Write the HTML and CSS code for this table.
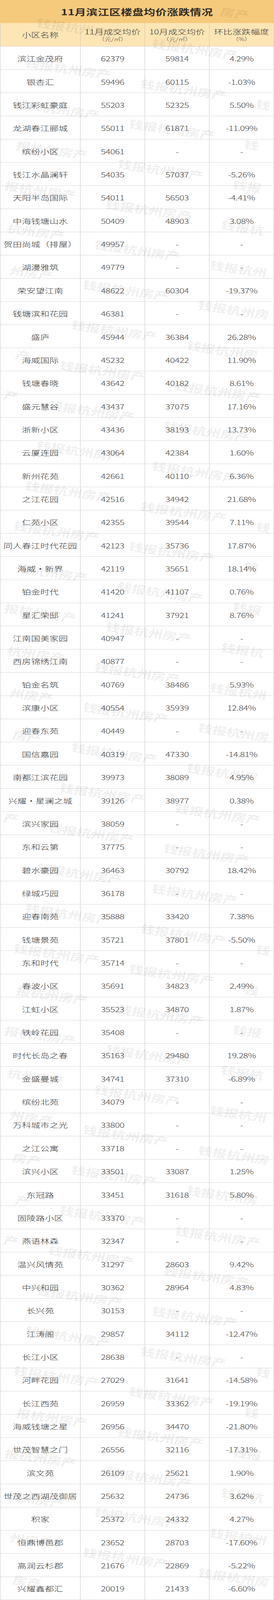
FILE: index.html
```html
<!DOCTYPE html>
<html lang="zh-CN">
<head>
<meta charset="utf-8">
<title>11月滨江区楼盘均价涨跌情况</title>
<link rel="stylesheet" href="styles.css">
</head>
<body>
<div class="page">
<div class="sheet">
  <div class="title">11月滨江区楼盘均价涨跌情况</div>
  <div class="row head">
    <div class="cell"><span class="h1">小区名称</span></div>
    <div class="cell"><span class="h1">11月成交均价</span><span class="h2">（元/㎡）</span></div>
    <div class="cell"><span class="h1">10月成交均价</span><span class="h2">（元/㎡）</span></div>
    <div class="cell"><span class="h1">环比涨跌幅度</span><span class="h2">（%）</span></div>
  </div>
  <div class="row"><div class="cell name">滨江金茂府</div><div class="cell num">62379</div><div class="cell num">59814</div><div class="cell num">4.29%</div></div>
  <div class="row"><div class="cell name">银杏汇</div><div class="cell num">59496</div><div class="cell num">60115</div><div class="cell num">-1.03%</div></div>
  <div class="row"><div class="cell name">钱江彩虹豪庭</div><div class="cell num">55203</div><div class="cell num">52325</div><div class="cell num">5.50%</div></div>
  <div class="row"><div class="cell name">龙湖春江郦城</div><div class="cell num">55011</div><div class="cell num">61871</div><div class="cell num">-11.09%</div></div>
  <div class="row"><div class="cell name">缤纷小区</div><div class="cell num">54061</div><div class="cell num">-</div><div class="cell num">-</div></div>
  <div class="row"><div class="cell name">钱江水晶澜轩</div><div class="cell num">54035</div><div class="cell num">57037</div><div class="cell num">-5.26%</div></div>
  <div class="row"><div class="cell name">天阳半岛国际</div><div class="cell num">54011</div><div class="cell num">56503</div><div class="cell num">-4.41%</div></div>
  <div class="row"><div class="cell name">中海钱塘山水</div><div class="cell num">50409</div><div class="cell num">48903</div><div class="cell num">3.08%</div></div>
  <div class="row"><div class="cell name">贺田尚城（排屋）</div><div class="cell num">49957</div><div class="cell num">-</div><div class="cell num">-</div></div>
  <div class="row"><div class="cell name">湖漫雅筑</div><div class="cell num">49779</div><div class="cell num">-</div><div class="cell num">-</div></div>
  <div class="row"><div class="cell name">荣安望江南</div><div class="cell num">48622</div><div class="cell num">60304</div><div class="cell num">-19.37%</div></div>
  <div class="row"><div class="cell name">钱塘滨和花园</div><div class="cell num">46381</div><div class="cell num">-</div><div class="cell num">-</div></div>
  <div class="row"><div class="cell name">盛庐</div><div class="cell num">45944</div><div class="cell num">36384</div><div class="cell num">26.28%</div></div>
  <div class="row"><div class="cell name">海威国际</div><div class="cell num">45232</div><div class="cell num">40422</div><div class="cell num">11.90%</div></div>
  <div class="row"><div class="cell name">钱塘春晓</div><div class="cell num">43642</div><div class="cell num">40182</div><div class="cell num">8.61%</div></div>
  <div class="row"><div class="cell name">盛元慧谷</div><div class="cell num">43437</div><div class="cell num">37075</div><div class="cell num">17.16%</div></div>
  <div class="row"><div class="cell name">浙新小区</div><div class="cell num">43436</div><div class="cell num">38193</div><div class="cell num">13.73%</div></div>
  <div class="row"><div class="cell name">云厦连园</div><div class="cell num">43064</div><div class="cell num">42384</div><div class="cell num">1.60%</div></div>
  <div class="row"><div class="cell name">新州花苑</div><div class="cell num">42661</div><div class="cell num">40110</div><div class="cell num">6.36%</div></div>
  <div class="row"><div class="cell name">之江花园</div><div class="cell num">42516</div><div class="cell num">34942</div><div class="cell num">21.68%</div></div>
  <div class="row"><div class="cell name">仁苑小区</div><div class="cell num">42355</div><div class="cell num">39544</div><div class="cell num">7.11%</div></div>
  <div class="row"><div class="cell name">同人春江时代花园</div><div class="cell num">42123</div><div class="cell num">35736</div><div class="cell num">17.87%</div></div>
  <div class="row"><div class="cell name"><span class="label">海威<span class="dot">·</span>新界</span></div><div class="cell num">42119</div><div class="cell num">35651</div><div class="cell num">18.14%</div></div>
  <div class="row"><div class="cell name">铂金时代</div><div class="cell num">41420</div><div class="cell num">41107</div><div class="cell num">0.76%</div></div>
  <div class="row"><div class="cell name">星汇荣邸</div><div class="cell num">41241</div><div class="cell num">37921</div><div class="cell num">8.76%</div></div>
  <div class="row"><div class="cell name">江南国美家园</div><div class="cell num">40947</div><div class="cell num">-</div><div class="cell num">-</div></div>
  <div class="row"><div class="cell name">西房锦绣江南</div><div class="cell num">40877</div><div class="cell num">-</div><div class="cell num">-</div></div>
  <div class="row"><div class="cell name">铂金名筑</div><div class="cell num">40769</div><div class="cell num">38486</div><div class="cell num">5.93%</div></div>
  <div class="row"><div class="cell name">滨康小区</div><div class="cell num">40554</div><div class="cell num">35939</div><div class="cell num">12.84%</div></div>
  <div class="row"><div class="cell name">迎春东苑</div><div class="cell num">40449</div><div class="cell num">-</div><div class="cell num">-</div></div>
  <div class="row"><div class="cell name">国信嘉园</div><div class="cell num">40319</div><div class="cell num">47330</div><div class="cell num">-14.81%</div></div>
  <div class="row"><div class="cell name">南都江滨花园</div><div class="cell num">39973</div><div class="cell num">38089</div><div class="cell num">4.95%</div></div>
  <div class="row"><div class="cell name"><span class="label">兴耀<span class="dot">·</span>星澜之城</span></div><div class="cell num">39126</div><div class="cell num">38977</div><div class="cell num">0.38%</div></div>
  <div class="row"><div class="cell name">滨兴家园</div><div class="cell num">38059</div><div class="cell num">-</div><div class="cell num">-</div></div>
  <div class="row"><div class="cell name">东和云第</div><div class="cell num">37775</div><div class="cell num">-</div><div class="cell num">-</div></div>
  <div class="row"><div class="cell name">碧水豪园</div><div class="cell num">36463</div><div class="cell num">30792</div><div class="cell num">18.42%</div></div>
  <div class="row"><div class="cell name">绿城巧园</div><div class="cell num">36178</div><div class="cell num">-</div><div class="cell num">-</div></div>
  <div class="row"><div class="cell name">迎春南苑</div><div class="cell num">35888</div><div class="cell num">33420</div><div class="cell num">7.38%</div></div>
  <div class="row"><div class="cell name">钱塘景苑</div><div class="cell num">35721</div><div class="cell num">37801</div><div class="cell num">-5.50%</div></div>
  <div class="row"><div class="cell name">东和时代</div><div class="cell num">35714</div><div class="cell num">-</div><div class="cell num">-</div></div>
  <div class="row"><div class="cell name">春波小区</div><div class="cell num">35691</div><div class="cell num">34823</div><div class="cell num">2.49%</div></div>
  <div class="row"><div class="cell name">江虹小区</div><div class="cell num">35523</div><div class="cell num">34870</div><div class="cell num">1.87%</div></div>
  <div class="row"><div class="cell name">铁岭花园</div><div class="cell num">35408</div><div class="cell num">-</div><div class="cell num">-</div></div>
  <div class="row"><div class="cell name">时代长岛之春</div><div class="cell num">35163</div><div class="cell num">29480</div><div class="cell num">19.28%</div></div>
  <div class="row"><div class="cell name">金盛曼城</div><div class="cell num">34741</div><div class="cell num">37310</div><div class="cell num">-6.89%</div></div>
  <div class="row"><div class="cell name">缤纷北苑</div><div class="cell num">34079</div><div class="cell num">-</div><div class="cell num">-</div></div>
  <div class="row"><div class="cell name">万科城市之光</div><div class="cell num">33800</div><div class="cell num">-</div><div class="cell num">-</div></div>
  <div class="row"><div class="cell name">之江公寓</div><div class="cell num">33718</div><div class="cell num">-</div><div class="cell num">-</div></div>
  <div class="row"><div class="cell name">滨兴小区</div><div class="cell num">33501</div><div class="cell num">33087</div><div class="cell num">1.25%</div></div>
  <div class="row"><div class="cell name">东冠路</div><div class="cell num">33451</div><div class="cell num">31618</div><div class="cell num">5.80%</div></div>
  <div class="row"><div class="cell name">固陵路小区</div><div class="cell num">33370</div><div class="cell num">-</div><div class="cell num">-</div></div>
  <div class="row"><div class="cell name">燕语林森</div><div class="cell num">32347</div><div class="cell num">-</div><div class="cell num">-</div></div>
  <div class="row"><div class="cell name">温兴风情苑</div><div class="cell num">31297</div><div class="cell num">28603</div><div class="cell num">9.42%</div></div>
  <div class="row"><div class="cell name">中兴和园</div><div class="cell num">30362</div><div class="cell num">28964</div><div class="cell num">4.83%</div></div>
  <div class="row"><div class="cell name">长兴苑</div><div class="cell num">30153</div><div class="cell num">-</div><div class="cell num">-</div></div>
  <div class="row"><div class="cell name">江涛阁</div><div class="cell num">29857</div><div class="cell num">34112</div><div class="cell num">-12.47%</div></div>
  <div class="row"><div class="cell name">长江小区</div><div class="cell num">28638</div><div class="cell num">-</div><div class="cell num">-</div></div>
  <div class="row"><div class="cell name">河畔花园</div><div class="cell num">27029</div><div class="cell num">31641</div><div class="cell num">-14.58%</div></div>
  <div class="row"><div class="cell name">长江西苑</div><div class="cell num">26959</div><div class="cell num">33362</div><div class="cell num">-19.19%</div></div>
  <div class="row"><div class="cell name">海威钱塘之星</div><div class="cell num">26956</div><div class="cell num">34470</div><div class="cell num">-21.80%</div></div>
  <div class="row"><div class="cell name">世茂智慧之门</div><div class="cell num">26556</div><div class="cell num">32116</div><div class="cell num">-17.31%</div></div>
  <div class="row"><div class="cell name">滨文苑</div><div class="cell num">26109</div><div class="cell num">25621</div><div class="cell num">1.90%</div></div>
  <div class="row"><div class="cell name">世茂之西湖茂御居</div><div class="cell num">25632</div><div class="cell num">24736</div><div class="cell num">3.62%</div></div>
  <div class="row"><div class="cell name">积家</div><div class="cell num">25372</div><div class="cell num">24332</div><div class="cell num">4.27%</div></div>
  <div class="row"><div class="cell name">恒鼎博邑郡</div><div class="cell num">23652</div><div class="cell num">28703</div><div class="cell num">-17.60%</div></div>
  <div class="row"><div class="cell name">高润云杉郡</div><div class="cell num">21676</div><div class="cell num">22869</div><div class="cell num">-5.22%</div></div>
  <div class="row last"><div class="cell name">兴耀鑫都汇</div><div class="cell num">20019</div><div class="cell num">21433</div><div class="cell num">-6.60%</div></div>
  <div class="watermarks" aria-hidden="true"></div>
</div>
</div>
<script src="script.js"></script>
</body>
</html>
```

FILE: styles.css
```css
html, body {
  margin: 0;
  padding: 0;
  background: #ffffff;
}

body {
  font-family: "Noto Sans CJK SC", "Noto Sans", sans-serif;
  color: #3a3a3a;
}

/* The photographed frame; the sheet is fitted into it vertically. */
.page {
  width: 701px;
  height: 100vh;
  overflow: hidden;
}

.sheet {
  position: relative;
  width: 701px;
  height: 5521px;
  overflow: hidden;
  transform: scaleY(var(--fit, 1));
  transform-origin: 0 0;
}

.title {
  height: 80px;
  background: #f6ca7c;
  display: flex;
  align-items: center;
  justify-content: center;
  font-size: 29px;
  font-weight: 700;
  color: #2f2a24;
  letter-spacing: 0.5px;
}

.row {
  display: grid;
  grid-template-columns: 205px 165px 165px 165px;
  height: 80px;
  box-sizing: border-box;
  border-left: 1px solid #c9c9c9;
  border-top: 1px solid #c9c9c9;
}

.row.head {
  border-top: none;
  background: #fde5b6;
}

.row.last {
  height: 81px;
  border-bottom: 1px solid #c9c9c9;
}

.cell {
  box-sizing: border-box;
  border-right: 1px solid #c9c9c9;
  display: flex;
  align-items: center;
  justify-content: center;
  font-size: 23.5px;
  line-height: 30px;
  font-weight: 300;
  white-space: nowrap;
  padding-top: 3px;
}

.head .cell {
  flex-direction: column;
  border-right-color: #d2c6ad;
  padding-top: 0;
}

.h1 {
  font-size: 23.5px;
  line-height: 28px;
  color: #333333;
}

.h2 {
  font-size: 17px;
  line-height: 24px;
  color: #4a4a4a;
}

.name {
  color: #333333;
}

.num {
  color: #3c3c3c;
  letter-spacing: -0.6px;
}

.label {
  display: inline-flex;
  align-items: center;
}

.dot {
  display: inline-block;
  width: 23px;
  text-align: center;
}

.watermarks {
  position: absolute;
  left: 0;
  top: 0;
  width: 701px;
  height: 5521px;
  overflow: hidden;
  pointer-events: none;
}

.wm {
  position: absolute;
  font-size: 37px;
  line-height: 37px;
  font-weight: 700;
  white-space: nowrap;
  color: rgba(0, 0, 0, 0.085);
  transform: rotate(11deg);
  transform-origin: 18px 18px;
}
```

FILE: script.js
```js
(function () {
  /* fit the 5521px sheet into the frame that is actually photographed */
  var fit = Math.min(1, window.innerHeight / 5521);
  document.documentElement.style.setProperty('--fit', String(fit));

  var layer = document.querySelector('.watermarks');
  var text = '钱报杭州房产';
  var ang = 11 * Math.PI / 180;
  var cs = 37 * Math.cos(ang), sn = 37 * Math.sin(ang);
  var ax = -29.5, ay = 138.7, bx = 295, by = 71;
  var px = 112, py = 80;
  var W = 701, H = 5521, padX = 24, padY = 34;
  for (var m = -10; m <= 50; m++) {
    for (var n = -10; n <= 25; n++) {
      var x = px + m * ax + n * bx;
      var y = py + m * ay + n * by;
      if (x < -260 || x > W || y < -80 || y > H + 20) continue;
      /* keep only the characters that fall inside the sheet */
      var ks = -1, ke = -1;
      for (var k = 0; k < text.length; k++) {
        var cx = x + cs * k, cy = y + sn * k;
        if (cx - padX >= 0 && cx + padX <= W && cy - padY >= 0 && cy + padY <= H) {
          if (ks < 0) ks = k;
          ke = k;
        }
      }
      if (ks < 0) continue;
      var s = document.createElement('span');
      s.className = 'wm';
      s.textContent = text.slice(ks, ke + 1);
      s.style.left = (x + cs * ks - 18).toFixed(1) + 'px';
      s.style.top = (y + sn * ks - 18).toFixed(1) + 'px';
      layer.appendChild(s);
    }
  }
})();
```
